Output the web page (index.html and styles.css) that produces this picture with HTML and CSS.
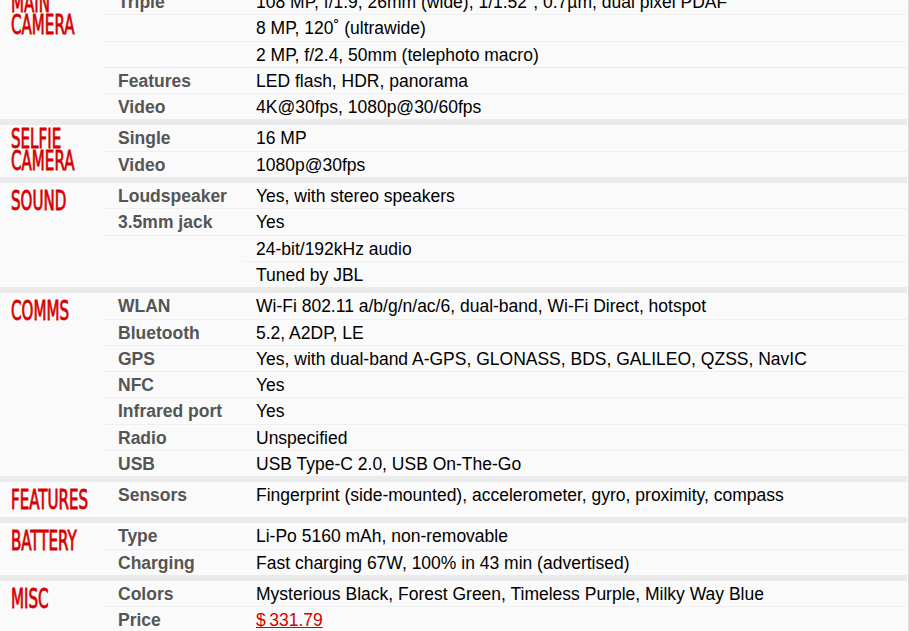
FILE: index.html
```html
<!DOCTYPE html>
<html>
<head>
<meta charset="utf-8">
<link rel="stylesheet" href="styles.css">
</head>
<body>
<div class="page">
<div class="specs">
  <table class="sec">
    <tr><th rowspan="5" class="two"><span class="h">Main<br>Camera</span></th><td class="ttl">Triple</td><td class="nfo">108 MP, f/1.9, 26mm (wide), 1/1.52", 0.7µm, dual pixel PDAF</td></tr>
    <tr><td class="ttl"></td><td class="nfo">8 MP, 120˚ (ultrawide)</td></tr>
    <tr class="thick"><td class="ttl"></td><td class="nfo">2 MP, f/2.4, 50mm (telephoto macro)</td></tr>
    <tr><td class="ttl">Features</td><td class="nfo">LED flash, HDR, panorama</td></tr>
    <tr><td class="ttl">Video</td><td class="nfo">4K@30fps, 1080p@30/60fps</td></tr>
  </table>
  <table class="sec">
    <tr><th rowspan="2" class="two"><span class="h">Selfie<br>camera</span></th><td class="ttl">Single</td><td class="nfo">16 MP</td></tr>
    <tr><td class="ttl">Video</td><td class="nfo">1080p@30fps</td></tr>
  </table>
  <table class="sec">
    <tr><th rowspan="4"><span class="h">Sound</span></th><td class="ttl">Loudspeaker</td><td class="nfo">Yes, with stereo speakers</td></tr>
    <tr><td class="ttl">3.5mm jack</td><td class="nfo">Yes</td></tr>
    <tr><td class="ttl blank"></td><td class="nfo">24-bit/192kHz audio</td></tr>
    <tr><td class="ttl blank"></td><td class="nfo">Tuned by JBL</td></tr>
  </table>
  <table class="sec">
    <tr><th rowspan="7"><span class="h">Comms</span></th><td class="ttl">WLAN</td><td class="nfo">Wi-Fi 802.11 a/b/g/n/ac/6, dual-band, Wi-Fi Direct, hotspot</td></tr>
    <tr><td class="ttl">Bluetooth</td><td class="nfo">5.2, A2DP, LE</td></tr>
    <tr><td class="ttl">GPS</td><td class="nfo">Yes, with dual-band A-GPS, GLONASS, BDS, GALILEO, QZSS, NavIC</td></tr>
    <tr><td class="ttl">NFC</td><td class="nfo">Yes</td></tr>
    <tr><td class="ttl">Infrared port</td><td class="nfo">Yes</td></tr>
    <tr><td class="ttl">Radio</td><td class="nfo">Unspecified</td></tr>
    <tr><td class="ttl">USB</td><td class="nfo">USB Type-C 2.0, USB On-The-Go</td></tr>
  </table>
  <table class="sec">
    <tr><th rowspan="1"><span class="h">Features</span></th><td class="ttl">Sensors</td><td class="nfo">Fingerprint (side-mounted), accelerometer, gyro, proximity, compass</td></tr>
  </table>
  <table class="sec">
    <tr><th rowspan="2"><span class="h">Battery</span></th><td class="ttl">Type</td><td class="nfo">Li-Po 5160 mAh, non-removable</td></tr>
    <tr><td class="ttl">Charging</td><td class="nfo">Fast charging 67W, 100% in 43 min (advertised)</td></tr>
  </table>
  <table class="sec">
    <tr><th rowspan="2"><span class="h">Misc</span></th><td class="ttl">Colors</td><td class="nfo">Mysterious Black, Forest Green, Timeless Purple, Milky Way Blue</td></tr>
    <tr><td class="ttl">Price</td><td class="nfo"><a class="price" href="#">$&thinsp;331.79</a></td></tr>
  </table>
</div>
</div>
</body>
</html>
```
FILE: styles.css
```css
html, body {
  margin: 0;
  padding: 0;
  background: #fafafa;
  overflow: hidden;
}
.page {
  width: 908px;
  border-right: 1px solid #dcdcdc;
  min-height: 631px;
}
.specs {
  width: 907px;
  margin-top: -17px;
}
.sec {
  width: 907px;
  border-collapse: collapse;
  border-spacing: 0;
  border-top: 6px solid #ebebeb;
  table-layout: fixed;
}
.sec th {
  width: 94px;
  padding: 7px 0 6px 11px;
  text-align: left;
  vertical-align: top;
  color: #d50000;
  font-family: "Liberation Sans Narrow", "DejaVu Sans Condensed", "Liberation Sans", sans-serif;
  font-weight: 400;
  font-size: 25.8px;
  line-height: 22px;
  text-transform: uppercase;
  white-space: nowrap;
  -webkit-text-stroke: 0.8px #d50000;
}
.sec th.two {
  padding-top: 2.5px;
  padding-bottom: 4px;
}
.h {
  display: inline-block;
  transform: scaleX(0.65);
  transform-origin: left top;
}
.sec td {
  vertical-align: top;
  font-family: "Liberation Sans", Arial, sans-serif;
  font-size: 17.5px;
  line-height: 20.3px;
  padding: 3px 0 2px 13px;
  border-bottom: 1px solid #efefef;
  white-space: nowrap;
}
.sec tr:last-child td {
  border-bottom: 0;
}
.sec td.ttl {
  width: 125px;
  font-weight: 700;
  color: #555;
}
.sec td.ttl.blank {
  border-bottom-color: transparent;
}
.sec td.nfo {
  color: #000;
}
.sec tr.thick td {
  border-bottom-color: #e8e8e8;
}
.price {
  color: #d50000;
  text-decoration: underline;
}
```
